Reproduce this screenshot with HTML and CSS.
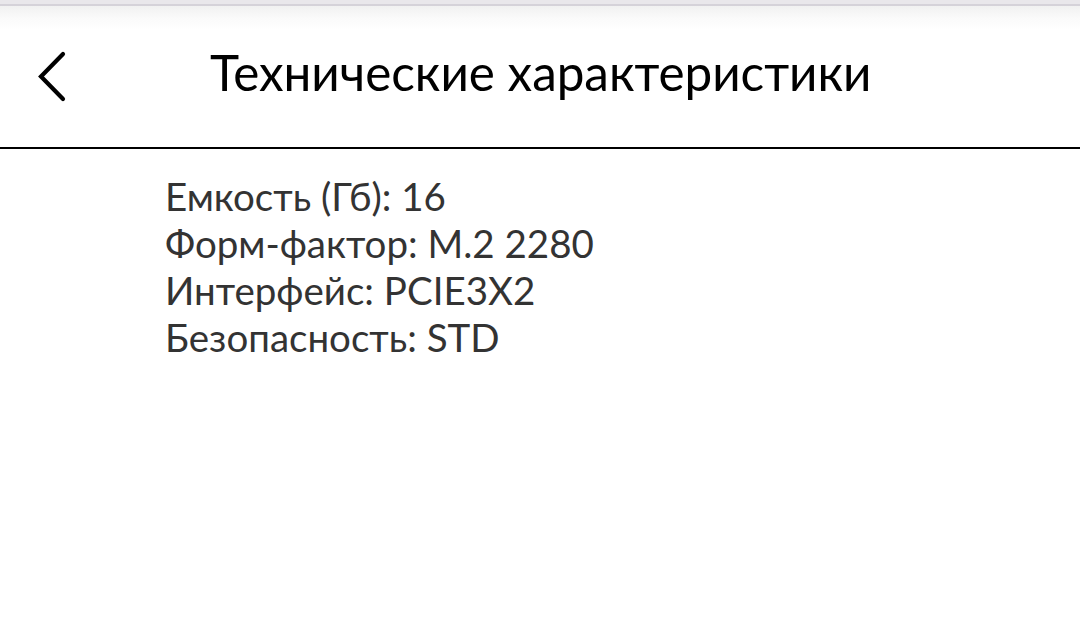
FILE: index.html
```html
<!DOCTYPE html>
<html lang="ru">
<head>
<meta charset="utf-8">
<link rel="stylesheet" href="styles.css">
</head>
<body>
<div class="topstrip"></div>
<header class="header">
  <button class="back" aria-label="Назад">
    <svg width="30" height="52" viewBox="0 0 30 52"><path d="M26 3 L4 25.5 L26 48" fill="none" stroke="#000" stroke-width="4.2" stroke-linecap="round" stroke-linejoin="miter"/></svg>
  </button>
  <h1 class="title">Технические характеристики</h1>
</header>
<main class="specs">
  <div class="spec">Емкость (Гб): 16</div>
  <div class="spec">Форм-фактор: M.2 2280</div>
  <div class="spec">Интерфейс: PCIE3X2</div>
  <div class="spec">Безопасность: STD</div>
</main>
</body>
</html>
```
FILE: styles.css
```css
html, body {
  margin: 0;
  padding: 0;
  background: #fff;
}
body {
  width: 1080px;
  height: 618px;
  overflow: hidden;
}
.topstrip {
  height: 4px;
  background: #e9e7eb;
  border-bottom: 2px solid #d5d2d9;
}
.header {
  height: 141px;
  display: flex;
  align-items: center;
  background: linear-gradient(#f1f1f1 0px, #fafafa 12px, #fff 24px);
  border-bottom: 2px solid #000;
}
.back {
  border: 0;
  background: none;
  padding: 0;
  margin: 0 0 0 37px;
  width: 30px;
  height: 52px;
  display: flex;
}
.title {
  margin: 0 0 10px 143px;
  font-family: Lato, sans-serif;
  font-weight: 400;
  font-size: 49.4px;
  line-height: 62px;
  color: #000;
}
.specs {
  padding: 24px 0 0 165px;
  font-family: Lato, sans-serif;
  font-size: 38.5px;
  line-height: 47px;
  color: #333;
}
```
